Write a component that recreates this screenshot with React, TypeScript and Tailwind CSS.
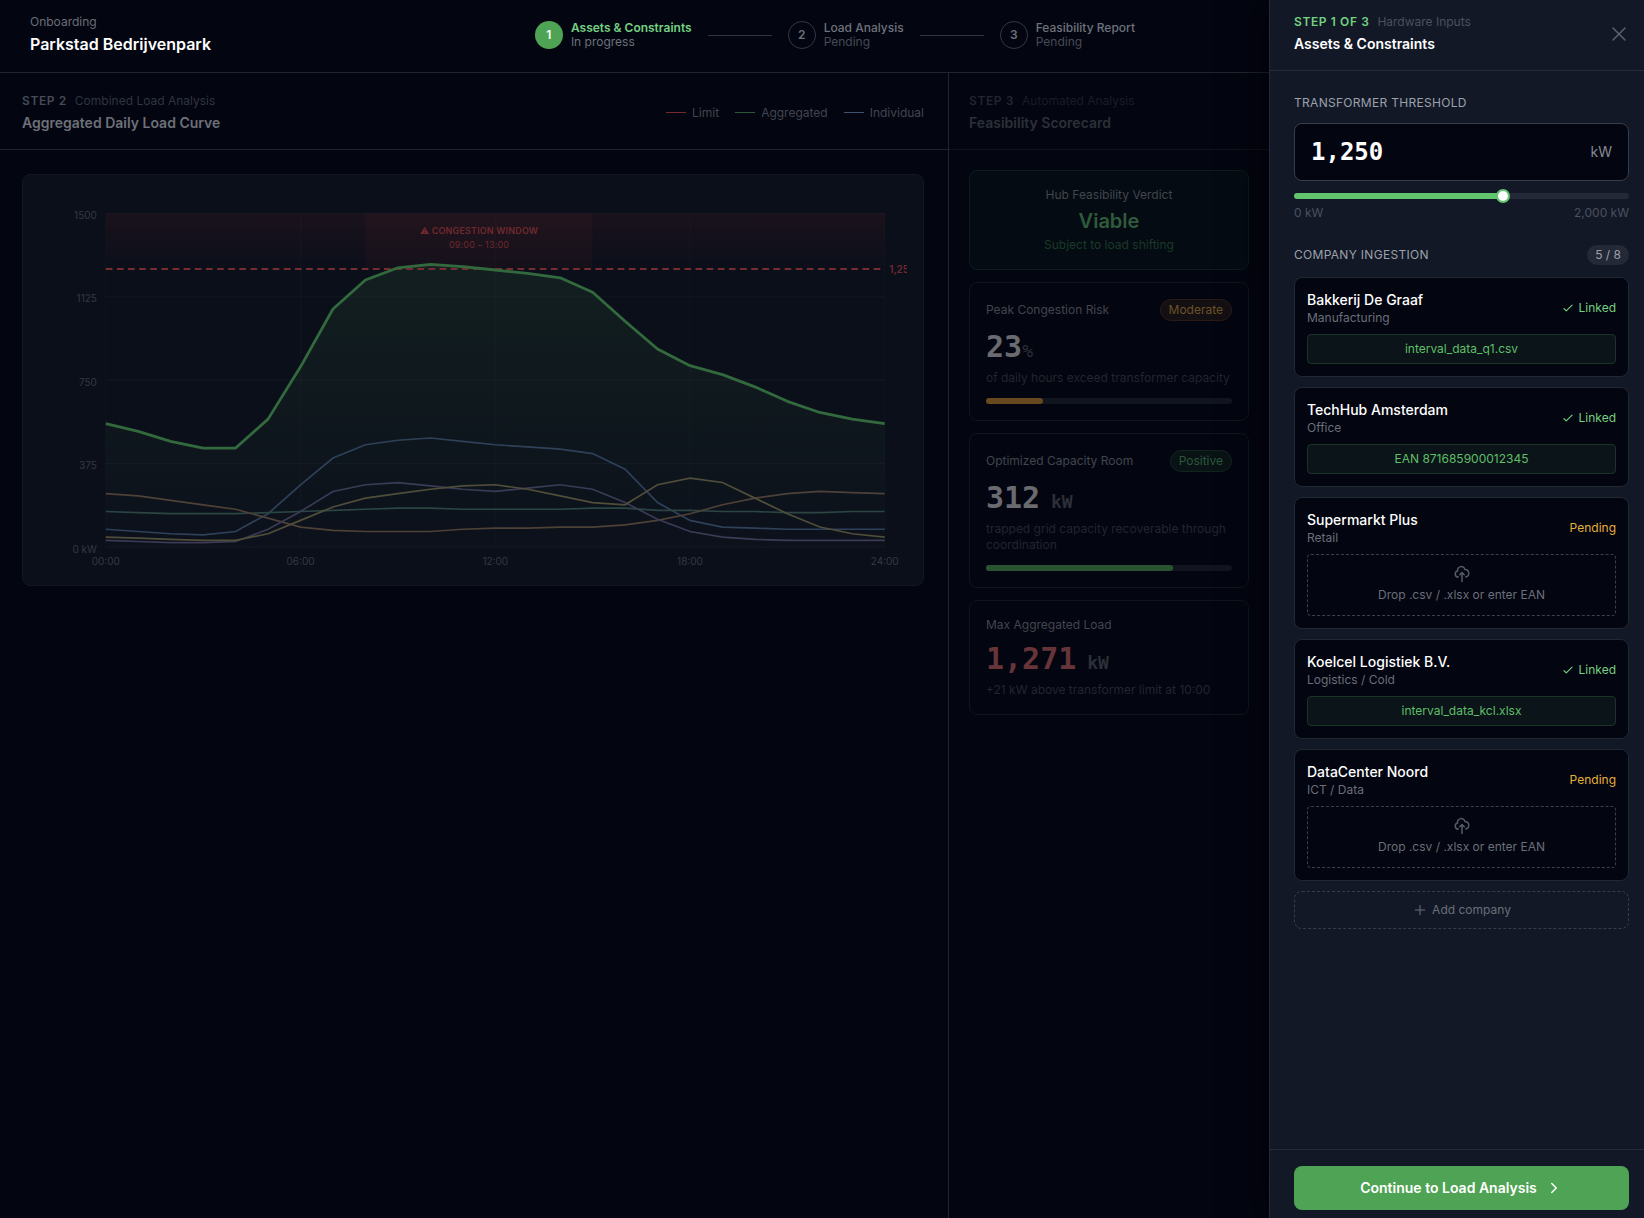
import { useState } from "react";
import { ChevronRight, Plus, X } from "lucide-react";
import { HiOutlineCheck, HiOutlineCloudUpload } from "react-icons/hi";

const MAX_LOAD = 1500;
const PLOT = { left: 60, top: 20, width: 700, height: 300 };

const profiles = [
    {
        name: "TechHub Amsterdam",
        color: "#2f415a",
        data: [80, 70, 60, 55, 70, 150, 280, 400, 460, 480, 490, 475, 460, 450, 440, 420, 350, 200, 120, 90, 85, 80, 80, 80, 80],
    },
    {
        name: "DataCenter Noord",
        color: "#2b4543",
        data: [160, 155, 150, 150, 150, 155, 160, 165, 170, 175, 175, 170, 170, 170, 170, 175, 175, 165, 165, 160, 160, 155, 155, 160, 160],
    },
    {
        name: "Bakkerij De Graaf",
        color: "#4e4137",
        data: [240, 230, 210, 190, 170, 130, 90, 75, 70, 70, 70, 80, 85, 85, 90, 90, 100, 120, 150, 190, 220, 240, 250, 245, 240],
    },
    {
        name: "Koelcel Logistiek B.V.",
        color: "#3c3b56",
        data: [30, 25, 20, 20, 25, 80, 160, 250, 280, 290, 275, 260, 250, 265, 280, 260, 200, 125, 70, 45, 35, 30, 30, 30, 30],
    },
    {
        name: "Supermarkt Plus",
        color: "#504e3a",
        data: [45, 40, 35, 30, 30, 60, 120, 180, 220, 240, 260, 275, 280, 260, 230, 200, 190, 280, 310, 290, 220, 150, 90, 60, 45],
    },
];

const aggregated = profiles[0].data.map((_, hour) =>
    profiles.reduce((sum, p) => sum + p.data[hour], 0)
);

const toX = (hour: number) => PLOT.left + (hour / 24) * PLOT.width;
const toY = (kw: number) => PLOT.top + PLOT.height - (kw / MAX_LOAD) * PLOT.height;
const toPoints = (data: number[]) =>
    data.map((kw, hour) => `${toX(hour)},${toY(kw)}`).join(" ");

const steps = [
    { label: "Assets & Constraints", status: "In progress" },
    { label: "Load Analysis", status: "Pending" },
    { label: "Feasibility Report", status: "Pending" },
];

const companies = [
    { name: "Bakkerij De Graaf", sector: "Manufacturing", source: "interval_data_q1.csv" },
    { name: "TechHub Amsterdam", sector: "Office", source: "EAN 871685900012345" },
    { name: "Supermarkt Plus", sector: "Retail", source: null },
    { name: "Koelcel Logistiek B.V.", sector: "Logistics / Cold", source: "interval_data_kcl.xlsx" },
    { name: "DataCenter Noord", sector: "ICT / Data", source: null },
];

function Stepper() {
    return (
        <ol className="flex items-center gap-4">
            {steps.map((step, i) => (
                <li key={step.label} className="flex items-center gap-4">
                    {i > 0 && <span className="h-px w-16 bg-[#2f3541]" />}
                    <div className="flex items-center gap-2">
                        <span
                            className={
                                i === 0
                                    ? "flex size-7 items-center justify-center rounded-full bg-[#4fa354] text-xs font-semibold text-white"
                                    : "flex size-7 items-center justify-center rounded-full border border-[#343a46] text-xs font-semibold text-[#6d727c]"
                            }
                        >
                            {i + 1}
                        </span>
                        <div className="text-xs leading-[14px]">
                            <p className={i === 0 ? "font-semibold text-[#73d181]" : "font-medium text-[#6d727c]"}>
                                {step.label}
                            </p>
                            <p className={i === 0 ? "text-[#6d727c]" : "text-[#454b57]"}>{step.status}</p>
                        </div>
                    </div>
                </li>
            ))}
        </ol>
    );
}

function LoadChart() {
    const floor = PLOT.top + PLOT.height;
    const right = PLOT.left + PLOT.width;

    return (
        <svg viewBox="0 0 780 340" className="block w-full" role="img" aria-label="Aggregated daily load curve">
            <defs>
                <linearGradient id="over-limit" x1="0" y1="0" x2="0" y2="1">
                    <stop offset="0" stopColor="#1a121c" />
                    <stop offset="1" stopColor="#0b0f1a" />
                </linearGradient>
                <linearGradient id="load-fill" x1="0" y1="0" x2="0" y2="1">
                    <stop offset="0" stopColor="#4fa354" stopOpacity="0.11" />
                    <stop offset="1" stopColor="#4fa354" stopOpacity="0.01" />
                </linearGradient>
            </defs>

            <rect x={PLOT.left} y={PLOT.top} width={PLOT.width} height={toY(1250) - PLOT.top} fill="url(#over-limit)" />
            <rect x={toX(8)} y={PLOT.top} width={toX(15) - toX(8)} height={toY(1250) - PLOT.top} fill="#ef4444" fillOpacity="0.045" />

            {[0, 375, 750, 1125, 1500].map((kw) => (
                <g key={kw}>
                    <line x1={PLOT.left} x2={right} y1={toY(kw)} y2={toY(kw)} stroke="#ffffff" strokeOpacity="0.03" />
                    <text x={PLOT.left - 8} y={toY(kw) + 5} textAnchor="end" fontSize="9" fill="#343943">
                        {kw === 0 ? "0 kW" : kw}
                    </text>
                </g>
            ))}
            {[0, 6, 12, 18, 24].map((hour) => (
                <g key={hour}>
                    <line x1={toX(hour)} x2={toX(hour)} y1={PLOT.top} y2={floor} stroke="#ffffff" strokeOpacity="0.025" />
                    <text x={toX(hour)} y={floor + 16} textAnchor="middle" fontSize="9" fill="#343943">
                        {String(hour).padStart(2, "0")}:00
                    </text>
                </g>
            ))}

            <polygon
                points={`${PLOT.left},${floor} ${toPoints(aggregated)} ${right},${floor}`}
                fill="url(#load-fill)"
            />
            {profiles.map((p) => (
                <polyline key={p.name} points={toPoints(p.data)} fill="none" stroke={p.color} strokeWidth="1.5" />
            ))}
            <line x1={PLOT.left} x2={right} y1={toY(1250)} y2={toY(1250)} stroke="#772c31" strokeWidth="1.8" strokeDasharray="6 4" />
            <polyline points={toPoints(aggregated)} fill="none" stroke="#336a3d" strokeWidth="2.5" strokeLinejoin="round" />

            <g fill="#70292e" textAnchor="middle">
                <text x={toX(11.5)} y={toY(1250) - 31} fontSize="8" fontWeight="600" letterSpacing="0.2">
                    <tspan fontWeight="400">⚠</tspan> CONGESTION WINDOW
                </text>
                <text x={toX(11.5)} y={toY(1250) - 19} fontSize="8" letterSpacing="0.2">
                    09:00 – 13:00
                </text>
            </g>
            <text x={right + 4} y={toY(1250) + 4} fontSize="9" fontWeight="600" fill="#70292e">
                1,250 kW
            </text>
        </svg>
    );
}

function LegendItem({ label, line }: { label: string; line: string }) {
    return (
        <li className="flex items-center gap-1.5">
            <span className={`h-px w-5 ${line}`} />
            {label}
        </li>
    );
}

function Scorecard() {
    return (
        <aside className="w-[321px] shrink-0 border-l border-[#20252f]">
            <header className="border-b border-[#0f131c] px-5 pt-[19px] pb-4">
                <p className="flex gap-2 text-xs leading-[18px] text-[#191d27]">
                    <span className="font-semibold tracking-wider text-[#22262f]">STEP 3</span>
                    Automated Analysis
                </p>
                <h2 className="mt-[3px] text-sm leading-5 font-semibold text-[#2c3038]">Feasibility Scorecard</h2>
            </header>

            <div className="flex flex-col gap-3 p-5 text-xs leading-4 text-[#22262f]">
                <section className="rounded-lg border border-[#0d1d1a] bg-[#040b12] p-4 text-center">
                    <p className="text-[#42464e]">Hub Feasibility Verdict</p>
                    <p className="mt-1 text-xl leading-7 font-semibold text-[#305a3c]">Viable</p>
                    <p className="mt-0.5 text-[#1b3a28]">Subject to load shifting</p>
                </section>

                <section className="rounded-lg border border-[#10141d] p-4">
                    <div className="flex items-center justify-between">
                        <h3 className="text-[#42464e]">Peak Congestion Risk</h3>
                        <span className="rounded-full border border-[#2a1a17] bg-[#140f13] px-2 py-0.5 text-[#6a5428]">
                            Moderate
                        </span>
                    </div>
                    <p className="mt-2 font-['DejaVu_Sans_Mono',monospace] text-[30px] leading-9 font-bold text-[#6a6b70]">
                        23<span className="text-lg font-normal text-[#2c3038]">%</span>
                    </p>
                    <p className="mt-[5px]">of daily hours exceed transformer capacity</p>
                    <div className="mt-3 h-1.5 rounded-full bg-[#11151e]">
                        <div className="h-full w-[23%] rounded-full bg-[#67481f]" />
                    </div>
                </section>

                <section className="rounded-lg border border-[#10141d] p-4">
                    <div className="flex items-center justify-between">
                        <h3 className="text-[#42464e]">Optimized Capacity Room</h3>
                        <span className="rounded-full border border-[#10251c] bg-[#091316] px-2 py-0.5 text-[#2c5738]">
                            Positive
                        </span>
                    </div>
                    <p className="mt-2 font-['DejaVu_Sans_Mono',monospace] text-[30px] leading-9 font-bold text-[#6a6b70]">
                        312<span className="text-lg text-[#2c3038]"> kW</span>
                    </p>
                    <p className="mt-[5px]">trapped grid capacity recoverable through coordination</p>
                    <div className="mt-3 h-1.5 rounded-full bg-[#11151e]">
                        <div className="h-full w-[76%] rounded-full bg-[#285430]" />
                    </div>
                </section>

                <section className="rounded-lg border border-[#10141d] p-4">
                    <h3 className="text-[#42464e]">Max Aggregated Load</h3>
                    <p className="mt-2 font-['DejaVu_Sans_Mono',monospace] text-[30px] leading-9 font-bold text-[#673539]">
                        1,271<span className="text-lg text-[#2c3038]"> kW</span>
                    </p>
                    <p className="mt-[5px]">+21 kW above transformer limit at 10:00</p>
                </section>
            </div>
        </aside>
    );
}

function CompanyCard({ name, sector, source }: (typeof companies)[number]) {
    return (
        <li className="rounded-lg border border-[#212733] bg-[#030510] p-3">
            <div className="flex items-center justify-between text-xs leading-4">
                <div>
                    <h4 className="text-sm leading-5 font-medium text-white">{name}</h4>
                    <p className="text-[#6a6f79]">{sector}</p>
                </div>
                {source ? (
                    <span className="flex items-center gap-1 text-[#73d181]">
                        <HiOutlineCheck size={14} />
                        Linked
                    </span>
                ) : (
                    <span className="text-[#e6b03c]">Pending</span>
                )}
            </div>
            {source ? (
                <p className="mt-2 rounded border border-[#1a3526] bg-[#0b1418] py-1.5 text-center text-xs leading-4 text-[#5fbf69]">
                    {source}
                </p>
            ) : (
                <button className="mt-2 flex w-full flex-col items-center gap-1 rounded border border-dashed border-[#3a404c] pt-2.5 pb-3 text-xs leading-4 text-[#6a6f79]">
                    <HiOutlineCloudUpload size={18} className="text-[#555b67]" />
                    Drop .csv / .xlsx or enter EAN
                </button>
            )}
        </li>
    );
}

function AssetsDrawer() {
    const [threshold, setThreshold] = useState(1250);

    return (
        <aside className="z-10 flex w-[375px] shrink-0 flex-col border-l border-[#252b37] bg-[#121826] shadow-[-8px_0_32px_rgba(0,0,0,0.6)]">
            <header className="flex items-center justify-between border-b border-[#252b37] pt-[14px] pr-[13px] pb-4 pl-6">
                <div>
                    <p className="flex gap-2 text-xs leading-4 text-[#4b515d]">
                        <span className="font-semibold tracking-wider text-[#73d181]">STEP 1 OF 3</span>
                        Hardware Inputs
                    </p>
                    <h2 className="mt-1 text-sm leading-5 font-semibold text-white">Assets &amp; Constraints</h2>
                </div>
                <button aria-label="Close" className="text-[#5b616d]">
                    <X size={24} strokeWidth={1.5} />
                </button>
            </header>

            <div className="flex-1 pt-6 pr-[15px] pb-6 pl-6">
                <label htmlFor="threshold" className="block text-xs leading-4 tracking-wide text-[#9ca1ab]">
                    TRANSFORMER THRESHOLD
                </label>
                <div className="mt-3 flex h-[58px] items-center rounded-lg border border-[#363c49] bg-[#030510] px-4">
                    <input
                        id="threshold"
                        value={threshold.toLocaleString("en-US")}
                        onChange={(e) => setThreshold(Number(e.target.value.replace(/\D/g, "")))}
                        className="w-full min-w-0 bg-transparent font-['DejaVu_Sans_Mono',monospace] text-2xl leading-8 font-bold text-white outline-none"
                    />
                    <span className="text-sm leading-5 text-[#858a94]">kW</span>
                </div>
                <div className="relative mt-3 h-1.5 rounded-full bg-[#232936]">
                    <div className="h-full rounded-full bg-[#62c46c]" style={{ width: `${threshold / 20}%` }} />
                    <span
                        className="absolute top-1/2 size-3.5 -translate-x-1/2 -translate-y-1/2 rounded-full border-2 border-[#62c46c] bg-white"
                        style={{ left: `${threshold / 20}%` }}
                    />
                    <input
                        type="range"
                        min={0}
                        max={2000}
                        value={threshold}
                        onChange={(e) => setThreshold(Number(e.target.value))}
                        aria-label="Transformer threshold in kW"
                        className="absolute inset-0 w-full cursor-pointer opacity-0"
                    />
                </div>
                <div className="mt-1.5 flex justify-between text-xs leading-4 text-[#4b515d]">
                    <span>0 kW</span>
                    <span>2,000 kW</span>
                </div>

                <div className="mt-6 flex items-center justify-between text-xs leading-4 text-[#9ca1ab]">
                    <h3 className="tracking-wide">COMPANY INGESTION</h3>
                    <span className="rounded-full bg-[#232936] px-2 py-0.5">5 / 8</span>
                </div>
                <ul className="mt-3 flex flex-col gap-2.5">
                    {companies.map((company) => (
                        <CompanyCard key={company.name} {...company} />
                    ))}
                </ul>
                <button className="mt-2.5 flex h-[38px] w-full items-center justify-center gap-1 rounded-lg border border-dashed border-[#363c49] text-xs text-[#6a6f79]">
                    <Plus size={16} strokeWidth={1.5} />
                    Add company
                </button>
            </div>

            <footer className="border-t border-[#252b37] pt-4 pr-[15px] pb-2 pl-6">
                <button className="flex h-11 w-full items-center justify-center gap-2 rounded-lg bg-[#4fa354] text-sm font-semibold text-white">
                    Continue to Load Analysis
                    <ChevronRight size={18} strokeWidth={2} />
                </button>
            </footer>
        </aside>
    );
}

export default function App() {
    return (
        <div className="flex min-h-screen bg-[#030510] font-['Inter',sans-serif]">
            <div className="flex min-w-0 flex-1 flex-col">
                <header className="flex items-center border-b border-[#20252f] pt-[14px] pr-[134px] pb-4 pl-[30px]">
                    <div className="mr-auto">
                        <p className="text-xs leading-4 text-[#6a6f79]">Onboarding</p>
                        <h1 className="mt-0.5 text-base leading-6 font-semibold text-white">Parkstad Bedrijvenpark</h1>
                    </div>
                    <Stepper />
                </header>

                <div className="flex flex-1">
                    <main className="min-w-0 flex-1">
                        <header className="flex items-center justify-between border-b border-[#20252f] pt-[19px] pr-6 pb-4 pl-[22px]">
                            <div>
                                <p className="flex gap-2 text-xs leading-[18px] text-[#2f3541]">
                                    <span className="font-semibold tracking-wider text-[#454b57]">STEP 2</span>
                                    Combined Load Analysis
                                </p>
                                <h2 className="mt-[3px] text-sm leading-5 font-semibold text-[#6d7078]">
                                    Aggregated Daily Load Curve
                                </h2>
                            </div>
                            <ul className="flex gap-4 text-xs leading-4 text-[#42464f]">
                                <LegendItem label="Limit" line="bg-[#742b30]" />
                                <LegendItem label="Aggregated" line="bg-[#2c5a36]" />
                                <LegendItem label="Individual" line="bg-[#3d536f]" />
                            </ul>
                        </header>
                        <div className="pt-6 pr-6 pl-[22px]">
                            <div className="rounded-lg border border-[#121820] bg-[#0b0f1a] p-4">
                                <LoadChart />
                            </div>
                        </div>
                    </main>
                    <Scorecard />
                </div>
            </div>
            <AssetsDrawer />
        </div>
    );
}
